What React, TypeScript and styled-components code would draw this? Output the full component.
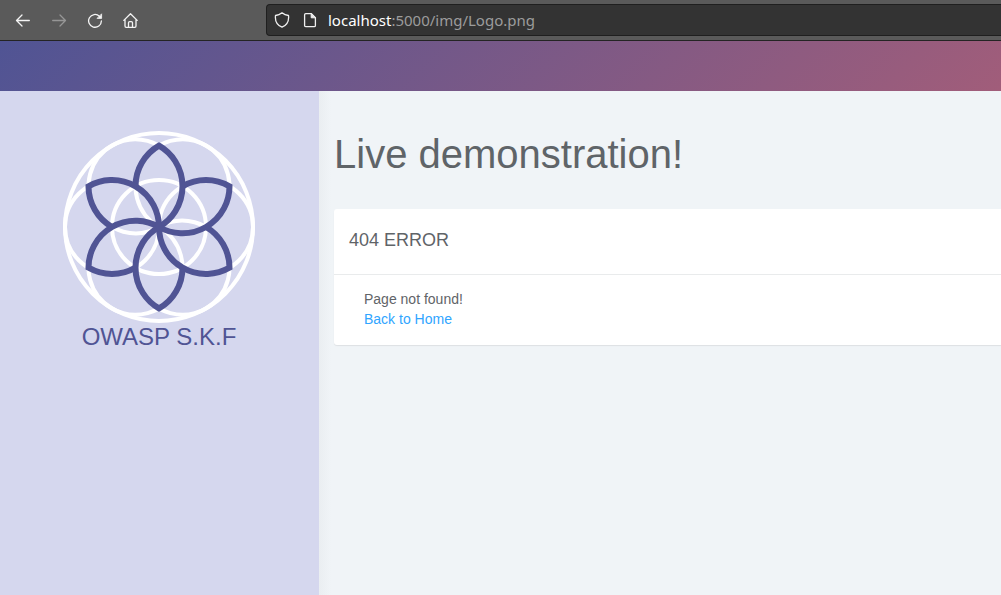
import React from "react";
import styled, { createGlobalStyle } from "styled-components";

const GlobalStyle = createGlobalStyle`
  * { box-sizing: border-box; }
  body {
    margin: 0;
    background: #f0f4f7;
    color: #5f6468;
    font: 14px/20px "Liberation Sans", Arial, sans-serif;
  }
`;

const Page = styled.div`
  display: flex;
  flex-direction: column;
  min-height: 100vh;
  overflow-x: hidden;
`;

const Toolbar = styled.nav`
  display: flex;
  align-items: center;
  gap: 12px;
  height: 41px;
  padding-left: 11px;
  background: #5a5a5a;
  border-bottom: 1px solid #242424;
`;

const ToolButton = styled.button`
  display: grid;
  place-items: center;
  width: 24px;
  height: 24px;
  padding: 0;
  border: 0;
  background: none;
  color: #f4f4f4;
  &:disabled { color: #969696; }
`;

const AddressBar = styled.div`
  display: flex;
  flex: 1;
  align-items: center;
  gap: 10px;
  height: 32px;
  margin-left: 111px;
  padding-left: 7px;
  color: #f0f0f0;
  background: #333333;
  border: 1px solid #1f1f1f;
  border-right: 0;
  border-radius: 4px 0 0 4px;
`;

const SiteIcons = styled.div`
  display: flex;
  gap: 12px;
`;

const Address = styled.div`
  color: #9c9c9c;
  font: 15px/20px "Noto Sans", "Open Sans", sans-serif;
`;

const Host = styled.span`
  color: #ffffff;
`;

const Banner = styled.header`
  height: 50px;
  background: linear-gradient(135deg, #505494 0%, #a15d7a 100%);
`;

const Body = styled.div`
  display: flex;
  flex: 1;
`;

const Sidebar = styled.aside`
  display: flex;
  flex: 0 0 319px;
  flex-direction: column;
  align-items: center;
  padding: 40px 1px 0 0;
  background: #d5d7ee;
`;

const Brand = styled.div`
  color: #505494;
  font-size: 24px;
  line-height: 28px;
`;

const Content = styled.main`
  flex: 1;
  min-width: 0;
  padding: 40px 0 40px 15px;
  background: linear-gradient(90deg, #eaeef1, #f0f4f7 12px);
`;

const Title = styled.h1`
  margin: 0 0 32px;
  font-size: 40px;
  font-weight: 400;
  line-height: 46px;
`;

const Card = styled.section`
  background: #ffffff;
  border-radius: 3px 0 0 3px;
  box-shadow: 0 1px 1px rgba(0, 0, 0, 0.08);
`;

const CardTitle = styled.h2`
  margin: 0;
  padding: 20px 15px 23px;
  border-bottom: 1px solid #e9ebec;
  font-size: 18px;
  font-weight: 400;
  line-height: 22px;
`;

const CardBody = styled.div`
  padding: 14px 30px 16px;
`;

const Message = styled.p`
  margin: 0;
`;

const HomeLink = styled.a`
  color: #30a5ff;
  text-decoration: none;
`;

const line = {
  fill: "none",
  stroke: "currentColor",
  strokeWidth: 1.3,
  strokeLinecap: "round",
  strokeLinejoin: "round",
} as const;

const Icon = ({ children }: { children: React.ReactNode }) => (
  <svg width="16" height="16" viewBox="0 0 16 16" aria-hidden="true" {...line}>
    {children}
  </svg>
);

const turns = [0, 60, 120, 180, 240, 300];

const FlowerLogo = () => (
  <svg width="192" height="192" viewBox="-96 -96 192 192" fill="none" role="img" aria-label="OWASP S.K.F">
    <g stroke="#ffffff" strokeWidth="4">
      <circle r="94" />
      <circle r="47" />
      {turns.map((a) => (
        <circle key={a} cx="47" r="47" transform={`rotate(${a})`} />
      ))}
    </g>
    <g stroke="#505494" strokeWidth="6">
      {turns.map((a) => (
        <path
          key={a}
          d="M0 0A47 47 0 0 0 0 -81.4A47 47 0 0 0 -23.5 -40.7"
          transform={`rotate(${a})`}
        />
      ))}
    </g>
  </svg>
);

export default function App() {
  return (
    <Page>
      <GlobalStyle />
      <Toolbar aria-label="Browser">
        <ToolButton aria-label="Back">
          <Icon><path d="M14.3 8.5H1.5M7 3L1.5 8.5L7 14" /></Icon>
        </ToolButton>
        <ToolButton aria-label="Forward" disabled>
          <Icon><path d="M1.7 8.5H14.5M9 3L14.5 8.5L9 14" /></Icon>
        </ToolButton>
        <ToolButton aria-label="Reload">
          <Icon>
            <path d="M14.4 9A6.4 6.4 0 1 1 12.4 4.2" />
            <path d="M14.6 2.2V6.4H10.4Z" fill="currentColor" strokeWidth="0.8" />
          </Icon>
        </ToolButton>
        <ToolButton aria-label="Home">
          <Icon>
            <path d="M0.8 8.4L7.5 1.7L14.2 8.4M2 7.4V14.1Q2 15.3 3.2 15.3H11.8Q13 15.3 13 14.1V7.4" />
            <path d="M5.5 15V10.8Q5.5 9.6 6.7 9.6H8.3Q9.5 9.6 9.5 10.8V15" />
          </Icon>
        </ToolButton>
        <AddressBar>
          <SiteIcons>
            <Icon>
              <path d="M8 0.8C10 2.4 12 3.2 14.5 3.5C15.1 8.5 13 13 8 15.2C3 13 0.9 8.5 1.5 3.5C4 3.2 6 2.4 8 0.8Z" />
            </Icon>
            <Icon>
              <path d="M3.7 1.6H9.4L13.4 5.6V13.4Q13.4 14.6 12.2 14.6H3.8Q2.6 14.6 2.6 13.4V2.7Q2.6 1.6 3.7 1.6Z" />
              <path d="M9.2 1.8V5.8H13.2Z" fill="currentColor" strokeWidth="1" />
            </Icon>
          </SiteIcons>
          <Address><Host>localhost</Host>:5000/img/Logo.png</Address>
        </AddressBar>
      </Toolbar>
      <Banner />
      <Body>
        <Sidebar>
          <FlowerLogo />
          <Brand>OWASP S.K.F</Brand>
        </Sidebar>
        <Content>
          <Title>Live demonstration!</Title>
          <Card>
            <CardTitle>404 ERROR</CardTitle>
            <CardBody>
              <Message>Page not found!</Message>
              <HomeLink href="#home">Back to Home</HomeLink>
            </CardBody>
          </Card>
        </Content>
      </Body>
    </Page>
  );
}
